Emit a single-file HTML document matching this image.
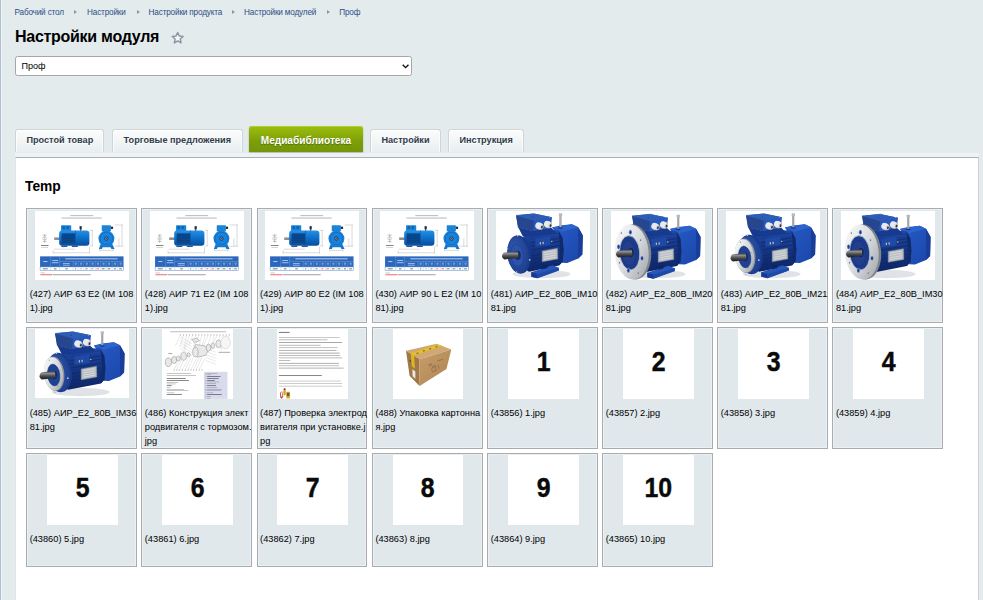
<!DOCTYPE html>
<html lang="ru"><head><meta charset="utf-8"><title>Настройки модуля</title>
<style>
html,body{margin:0;padding:0}
body{width:983px;height:600px;overflow:hidden;position:relative;background:#e4ebed;font-family:"Liberation Sans",sans-serif;color:#000}
.edge{position:absolute;left:0;top:0;width:1px;height:600px;background:#b0c0d0;box-shadow:1px 0 0 #edf2f4}
.bc{position:absolute;left:14.5px;top:6.5px;font-size:8.2px;letter-spacing:-.17px;line-height:12px;color:#2c4f85;white-space:nowrap}
.bc span{position:absolute;top:0}
.bc i{position:absolute;top:3.6px;width:0;height:0;border-left:3px solid #8d979e;border-top:2.3px solid transparent;border-bottom:2.3px solid transparent}
h1{position:absolute;left:15px;top:27.9px;margin:0;font-size:16px;letter-spacing:-.28px;line-height:18px;font-weight:bold;white-space:nowrap}
.star{position:absolute;left:170.6px;top:30.6px;width:13.4px;height:13.4px}
.sel{position:absolute;left:15.2px;top:56.4px;width:396.5px;height:19.4px;box-sizing:border-box;border:1px solid #a4a6a8;border-radius:2.5px;background:#fff;font-size:9.1px;line-height:19.4px;padding-left:5.2px}
.sel svg{position:absolute;right:1.2px;top:6.3px;width:7.2px;height:4.9px}
.tab{position:absolute;top:128.8px;height:23.7px;box-sizing:border-box;border:1px solid #cdd5d9;border-bottom:none;border-radius:3px 3px 0 0;background:linear-gradient(#fbfcfc,#e9eef0);box-shadow:inset 0 1px 0 #fff,inset 1px 0 0 rgba(255,255,255,.7),inset -1px 0 0 rgba(255,255,255,.7);font-size:9.15px;font-weight:bold;color:#2f3b49;text-shadow:0 1px 0 #fff;text-align:center;line-height:21.3px;white-space:nowrap}
.tab.act{top:125.6px;height:26.6px;border:none;background:linear-gradient(#9dbf0e,#7c9f08 60%,#73950a);color:#fff;font-size:10.1px;line-height:30.4px;text-shadow:0 1px 1px #526d08;box-shadow:inset 0 1px 0 #b2cf3a,0 1px 2px rgba(0,0,0,.25);border-radius:3px 3px 0 0}
.panel{position:absolute;left:15.4px;top:157px;width:963.6px;height:460px;box-sizing:border-box;background:#fff;border:1px solid #dfe5e9;border-right-color:#c9d2d8;border-top:1px solid #a7b2b8}
.band{position:absolute;left:15.2px;top:153.2px;width:963.8px;height:3.8px;background:#eef2f4}
h2{position:absolute;left:25px;top:178px;margin:0;font-size:13.8px;line-height:17px;font-weight:bold;white-space:nowrap}
.card{position:absolute;width:110.8px;box-sizing:border-box;border:1px solid #a9abad;background:#e1e8ec;box-shadow:inset 0 0 0 1px #e9f1f6}
.im{position:absolute;top:1.4px;height:69.2px;background:#fff;overflow:hidden}
.im svg{display:block;width:100%;height:100%}
.im.wide{left:7.5px;width:94px}
.im.sq{left:19.8px;width:70.8px;height:69.9px}
.num{text-align:center}
.num span{display:inline-block;font-weight:bold;font-size:27.6px;line-height:66px;transform:scaleX(.9);color:#0a0a0a;-webkit-text-stroke:.45px #0a0a0a}
.cap{position:absolute;left:2.6px;top:77.6px;font-size:9.24px;line-height:14.1px;white-space:nowrap;color:#000}
</style></head><body>
<div class="edge"></div>
<div class="bc">
<span style="left:0">Рабочий стол</span><i style="left:59.5px"></i>
<span style="left:72.5px">Настройки</span><i style="left:122px"></i>
<span style="left:134.1px">Настройки продукта</span><i style="left:217px"></i>
<span style="left:229.6px">Настройки модулей</span><i style="left:312.5px"></i>
<span style="left:324.7px">Проф</span>
</div>
<h1>Настройки модуля</h1>
<svg class="star" viewBox="0 0 24 24"><path d="M12 2.6l2.9 6.3 6.8.8-5 4.7 1.3 6.8-6-3.4-6 3.4 1.3-6.8-5-4.7 6.8-.8z" fill="#f4f6f7" stroke="#8a95a1" stroke-width="2.6" stroke-linejoin="round"/></svg>
<div class="sel">Проф<svg viewBox="0 0 8 6" preserveAspectRatio="none"><path d="M0.8 1l3.2 3.4L7.2 1" fill="none" stroke="#111" stroke-width="1.6"/></svg></div>

<div class="tab" style="left:15.2px;width:89.3px">Простой товар</div>
<div class="tab" style="left:111.6px;width:131.4px">Торговые предложения</div>
<div class="tab act" style="left:249.2px;width:113.5px">Медиабиблиотека</div>
<div class="tab" style="left:370.4px;width:70.2px">Настройки</div>
<div class="tab" style="left:448.4px;width:75.5px">Инструкция</div>
<div class="band"></div>
<div class="panel"></div>
<h2>Temp</h2>
<div class="card" style="left:26.05px;top:208.10px;height:114.70px"><div style="top:1.6px" class="im wide"><svg viewBox="0 0 94.5 69.4" preserveAspectRatio="none"><rect width="94.5" height="69.4" fill="#fff"/><rect x="35.5" y="4.4" width="23" height="0.7" fill="#9a9a9a"/><rect x="26.6" y="6.7" width="40.5" height="0.7" fill="#9a9a9a"/><g stroke="#9a9a9a" stroke-width=".5" fill="none"><ellipse cx="9.7" cy="27.5" rx="1.9" ry="1.6"/><path d="M7.6 24.3h4.2M9.7 23v9M7.8 30.6h3.8"/></g><rect x="6" y="34.2" width="7.6" height="0.9" fill="#777"/><rect x="6.4" y="36.3" width="6.6" height="0.5" fill="#aaa"/><g stroke="#8d9399" stroke-width=".35" fill="none"><path d="M18.2 39.5v3.2M54.8 36v6.7M18.2 41.9h36.6M19 38.3h21M57.5 19.4v15.6M55 19.4h3.5M55 35h3.5M65 37.5v3M78.5 37.5v3M65 39.5h13.5M87.5 14v21.5M80 14h8.5M84.3 27.5v8M80 35.3h8.5"/></g><defs><linearGradient id="sb0" x1="0" y1="0" x2="0" y2="1"><stop offset="0" stop-color="#2790e4"/><stop offset=".45" stop-color="#0f72cc"/><stop offset="1" stop-color="#084e9c"/></linearGradient></defs><rect x="19.3" y="26.5" width="5.6" height="2.6" fill="#8e8e8e"/><rect x="26.2" y="14.4" width="10.2" height="6" rx=".6" fill="#1b83d8"/><rect x="27.8" y="15.4" width="2.2" height="2.4" fill="#0d5cad"/><rect x="31.8" y="15.4" width="2.2" height="2.4" fill="#0d5cad"/><rect x="24.3" y="19.6" width="30.4" height="15.2" rx="3" fill="url(#sb0)"/><rect x="26.9" y="22.4" width="13.3" height="10.4" fill="#0b4c93"/><g stroke="#083a75" stroke-width=".6"><path d="M26.9 24.2h13.3M26.9 26h13.3M26.9 27.8h13.3M26.9 29.6h13.3M26.9 31.4h13.3"/></g><rect x="40.6" y="19.6" width=".5" height="15.2" fill="#0a4f9c"/><rect x="44.8" y="15.2" width="2.2" height="3.2" fill="#1d2e44"/><rect x="45.4" y="18.2" width="1" height="1.6" fill="#1d2e44"/><path d="M26.5 34.6h6v1.5h-6zM37 34.6h6v1.5h-6z" fill="#0d5cad"/><rect x="28" y="35.6" width="1" height=".7" fill="#e33"/><rect x="38.6" y="35.6" width="1" height=".7" fill="#e33"/><rect x="67.1" y="14.4" width="9.2" height="6" rx=".5" fill="#1b83d8"/><rect x="76.3" y="15.7" width="2.2" height="2.3" fill="#1d2e44"/><path d="M64.2 38l2-5.5h11.2l2.6 5.5h-3.2l-.8-1.6h-8l-.8 1.6z" fill="#1177d0"/><circle cx="71.8" cy="27.6" r="8" fill="#1a83d9"/><circle cx="71.8" cy="27.6" r="6.3" fill="none" stroke="#0d61b6" stroke-width=".6"/><circle cx="71.8" cy="27.6" r="2.2" fill="#0b4c93"/><circle cx="71.8" cy="27.6" r="1.2" fill="#8e8e8e"/><circle cx="71.8" cy="27.6" r=".5" fill="#222"/><rect x="5.1" y="45.5" width="83.9" height="10.6" fill="#2b67bc"/><rect x="5.1" y="56.1" width="83.9" height="3.7" fill="#fff" stroke="#2b67bc" stroke-width=".4"/><g stroke="#8fb4e6" stroke-width=".35"><path d="M15.8 45.5v14.3M24.8 45.5v14.3M24.8 50.6h64.2M38.3 50.6v9.2M43.5 50.6v9.2M49 50.6v9.2M55.2 50.6v9.2M60.6 50.6v9.2M66 50.6v9.2M71.6 50.6v9.2M77.6 50.6v9.2M83.2 50.6v9.2"/></g><g fill="#dbe8fa"><rect x="8.3" y="50.4" width="4.2" height=".8"/><rect x="17.4" y="49.2" width="5.8" height=".7"/><rect x="17" y="51.6" width="6.6" height=".7"/><rect x="30.5" y="47.6" width="52.5" height=".8"/><rect x="28" y="52.2" width="7" height=".6"/><rect x="28" y="54" width="7" height=".6"/></g><g fill="#cfe0f7"><rect x="39.8" y="52" width="2.2" height=".6"/><rect x="40.0" y="53.8" width="1.8" height=".5"/><rect x="45.2" y="52" width="2.2" height=".6"/><rect x="45.4" y="53.8" width="1.8" height=".5"/><rect x="51.0" y="52" width="2.2" height=".6"/><rect x="51.2" y="53.8" width="1.8" height=".5"/><rect x="56.8" y="52" width="2.2" height=".6"/><rect x="57.0" y="53.8" width="1.8" height=".5"/><rect x="62.2" y="52" width="2.2" height=".6"/><rect x="62.4" y="53.8" width="1.8" height=".5"/><rect x="67.8" y="52" width="2.2" height=".6"/><rect x="68.0" y="53.8" width="1.8" height=".5"/><rect x="73.4" y="52" width="2.2" height=".6"/><rect x="73.6" y="53.8" width="1.8" height=".5"/><rect x="79.3" y="52" width="2.2" height=".6"/><rect x="79.5" y="53.8" width="1.8" height=".5"/><rect x="85.0" y="52" width="2.2" height=".6"/><rect x="85.2" y="53.8" width="1.8" height=".5"/></g><g fill="#444"><rect x="7.8" y="57.7" width="5" height=".7"/><rect x="19" y="57.7" width="2.6" height=".7"/><rect x="30.4" y="57.7" width="2.6" height=".7"/><rect x="40.2" y="57.7" width="1.2" height=".7" fill="#444"/><rect x="45.8" y="57.7" width="1.0" height=".7" fill="#444"/><rect x="50.8" y="57.7" width="2.0" height=".7" fill="#444"/><rect x="56.6" y="57.7" width="2.0" height=".7" fill="#e33"/><rect x="61.8" y="57.7" width="2.6" height=".7" fill="#e33"/><rect x="67.2" y="57.7" width="2.8" height=".7" fill="#444"/><rect x="73.0" y="57.7" width="2.8" height=".7" fill="#444"/><rect x="79.4" y="57.7" width="2.0" height=".7" fill="#444"/><rect x="84.6" y="57.7" width="2.8" height=".7" fill="#444"/></g><rect x="5.4" y="61.9" width="4.6" height=".5" fill="#999"/><rect x="5.4" y="63.6" width="12" height=".8" fill="#e44"/><rect x="18" y="63.6" width="38" height=".8" fill="#888"/></svg></div><div class="cap" style="top:77.8px">(427) АИР 63 Е2 (IM 108<br>1).jpg</div></div>
<div class="card" style="left:141.20px;top:208.10px;height:114.70px"><div style="top:1.6px" class="im wide"><svg viewBox="0 0 94.5 69.4" preserveAspectRatio="none"><rect width="94.5" height="69.4" fill="#fff"/><rect x="35.5" y="4.4" width="23" height="0.7" fill="#9a9a9a"/><rect x="26.6" y="6.7" width="40.5" height="0.7" fill="#9a9a9a"/><g stroke="#9a9a9a" stroke-width=".5" fill="none"><ellipse cx="9.7" cy="27.5" rx="1.9" ry="1.6"/><path d="M7.6 24.3h4.2M9.7 23v9M7.8 30.6h3.8"/></g><rect x="6" y="34.2" width="7.6" height="0.9" fill="#777"/><rect x="6.4" y="36.3" width="6.6" height="0.5" fill="#aaa"/><g stroke="#8d9399" stroke-width=".35" fill="none"><path d="M18.2 39.5v3.2M54.8 36v6.7M18.2 41.9h36.6M19 38.3h21M57.5 19.4v15.6M55 19.4h3.5M55 35h3.5M65 37.5v3M78.5 37.5v3M65 39.5h13.5M87.5 14v21.5M80 14h8.5M84.3 27.5v8M80 35.3h8.5"/></g><defs><linearGradient id="sb1" x1="0" y1="0" x2="0" y2="1"><stop offset="0" stop-color="#2790e4"/><stop offset=".45" stop-color="#0f72cc"/><stop offset="1" stop-color="#084e9c"/></linearGradient></defs><rect x="19.3" y="26.5" width="5.6" height="2.6" fill="#8e8e8e"/><rect x="26.2" y="14.4" width="10.2" height="6" rx=".6" fill="#1b83d8"/><rect x="27.8" y="15.4" width="2.2" height="2.4" fill="#0d5cad"/><rect x="31.8" y="15.4" width="2.2" height="2.4" fill="#0d5cad"/><rect x="24.3" y="19.6" width="30.4" height="15.2" rx="3" fill="url(#sb1)"/><rect x="26.9" y="22.4" width="13.3" height="10.4" fill="#0b4c93"/><g stroke="#083a75" stroke-width=".6"><path d="M26.9 24.2h13.3M26.9 26h13.3M26.9 27.8h13.3M26.9 29.6h13.3M26.9 31.4h13.3"/></g><rect x="40.6" y="19.6" width=".5" height="15.2" fill="#0a4f9c"/><rect x="44.8" y="15.2" width="2.2" height="3.2" fill="#1d2e44"/><rect x="45.4" y="18.2" width="1" height="1.6" fill="#1d2e44"/><path d="M26.5 34.6h6v1.5h-6zM37 34.6h6v1.5h-6z" fill="#0d5cad"/><rect x="28" y="35.6" width="1" height=".7" fill="#e33"/><rect x="38.6" y="35.6" width="1" height=".7" fill="#e33"/><rect x="67.1" y="14.4" width="9.2" height="6" rx=".5" fill="#1b83d8"/><rect x="76.3" y="15.7" width="2.2" height="2.3" fill="#1d2e44"/><path d="M64.2 38l2-5.5h11.2l2.6 5.5h-3.2l-.8-1.6h-8l-.8 1.6z" fill="#1177d0"/><circle cx="71.8" cy="27.6" r="8" fill="#1a83d9"/><circle cx="71.8" cy="27.6" r="6.3" fill="none" stroke="#0d61b6" stroke-width=".6"/><circle cx="71.8" cy="27.6" r="2.2" fill="#0b4c93"/><circle cx="71.8" cy="27.6" r="1.2" fill="#8e8e8e"/><circle cx="71.8" cy="27.6" r=".5" fill="#222"/><rect x="5.1" y="45.5" width="83.9" height="10.6" fill="#2b67bc"/><rect x="5.1" y="56.1" width="83.9" height="3.7" fill="#fff" stroke="#2b67bc" stroke-width=".4"/><g stroke="#8fb4e6" stroke-width=".35"><path d="M15.8 45.5v14.3M24.8 45.5v14.3M24.8 50.6h64.2M38.3 50.6v9.2M43.5 50.6v9.2M49 50.6v9.2M55.2 50.6v9.2M60.6 50.6v9.2M66 50.6v9.2M71.6 50.6v9.2M77.6 50.6v9.2M83.2 50.6v9.2"/></g><g fill="#dbe8fa"><rect x="8.3" y="50.4" width="4.2" height=".8"/><rect x="17.4" y="49.2" width="5.8" height=".7"/><rect x="17" y="51.6" width="6.6" height=".7"/><rect x="30.5" y="47.6" width="52.5" height=".8"/><rect x="28" y="52.2" width="7" height=".6"/><rect x="28" y="54" width="7" height=".6"/></g><g fill="#cfe0f7"><rect x="39.8" y="52" width="2.2" height=".6"/><rect x="40.0" y="53.8" width="1.8" height=".5"/><rect x="45.2" y="52" width="2.2" height=".6"/><rect x="45.4" y="53.8" width="1.8" height=".5"/><rect x="51.0" y="52" width="2.2" height=".6"/><rect x="51.2" y="53.8" width="1.8" height=".5"/><rect x="56.8" y="52" width="2.2" height=".6"/><rect x="57.0" y="53.8" width="1.8" height=".5"/><rect x="62.2" y="52" width="2.2" height=".6"/><rect x="62.4" y="53.8" width="1.8" height=".5"/><rect x="67.8" y="52" width="2.2" height=".6"/><rect x="68.0" y="53.8" width="1.8" height=".5"/><rect x="73.4" y="52" width="2.2" height=".6"/><rect x="73.6" y="53.8" width="1.8" height=".5"/><rect x="79.3" y="52" width="2.2" height=".6"/><rect x="79.5" y="53.8" width="1.8" height=".5"/><rect x="85.0" y="52" width="2.2" height=".6"/><rect x="85.2" y="53.8" width="1.8" height=".5"/></g><g fill="#444"><rect x="7.8" y="57.7" width="5" height=".7"/><rect x="19" y="57.7" width="2.6" height=".7"/><rect x="30.4" y="57.7" width="2.6" height=".7"/><rect x="40.2" y="57.7" width="1.2" height=".7" fill="#444"/><rect x="45.8" y="57.7" width="1.0" height=".7" fill="#444"/><rect x="50.8" y="57.7" width="2.0" height=".7" fill="#444"/><rect x="56.6" y="57.7" width="2.0" height=".7" fill="#e33"/><rect x="61.8" y="57.7" width="2.6" height=".7" fill="#e33"/><rect x="67.2" y="57.7" width="2.8" height=".7" fill="#444"/><rect x="73.0" y="57.7" width="2.8" height=".7" fill="#444"/><rect x="79.4" y="57.7" width="2.0" height=".7" fill="#444"/><rect x="84.6" y="57.7" width="2.8" height=".7" fill="#444"/></g><rect x="5.4" y="61.9" width="4.6" height=".5" fill="#999"/><rect x="5.4" y="63.6" width="12" height=".8" fill="#e44"/><rect x="18" y="63.6" width="38" height=".8" fill="#888"/></svg></div><div class="cap" style="top:77.8px">(428) АИР 71 Е2 (IM 108<br>1).jpg</div></div>
<div class="card" style="left:256.50px;top:208.10px;height:114.70px"><div style="top:1.6px" class="im wide"><svg viewBox="0 0 94.5 69.4" preserveAspectRatio="none"><rect width="94.5" height="69.4" fill="#fff"/><rect x="35.5" y="4.4" width="23" height="0.7" fill="#9a9a9a"/><rect x="26.6" y="6.7" width="40.5" height="0.7" fill="#9a9a9a"/><g stroke="#9a9a9a" stroke-width=".5" fill="none"><ellipse cx="9.7" cy="27.5" rx="1.9" ry="1.6"/><path d="M7.6 24.3h4.2M9.7 23v9M7.8 30.6h3.8"/></g><rect x="6" y="34.2" width="7.6" height="0.9" fill="#777"/><rect x="6.4" y="36.3" width="6.6" height="0.5" fill="#aaa"/><g stroke="#8d9399" stroke-width=".35" fill="none"><path d="M18.2 39.5v3.2M54.8 36v6.7M18.2 41.9h36.6M19 38.3h21M57.5 19.4v15.6M55 19.4h3.5M55 35h3.5M65 37.5v3M78.5 37.5v3M65 39.5h13.5M87.5 14v21.5M80 14h8.5M84.3 27.5v8M80 35.3h8.5"/></g><defs><linearGradient id="sb2" x1="0" y1="0" x2="0" y2="1"><stop offset="0" stop-color="#2790e4"/><stop offset=".45" stop-color="#0f72cc"/><stop offset="1" stop-color="#084e9c"/></linearGradient></defs><rect x="19.3" y="26.5" width="5.6" height="2.6" fill="#8e8e8e"/><rect x="26.2" y="14.4" width="10.2" height="6" rx=".6" fill="#1b83d8"/><rect x="27.8" y="15.4" width="2.2" height="2.4" fill="#0d5cad"/><rect x="31.8" y="15.4" width="2.2" height="2.4" fill="#0d5cad"/><rect x="24.3" y="19.6" width="30.4" height="15.2" rx="3" fill="url(#sb2)"/><rect x="26.9" y="22.4" width="13.3" height="10.4" fill="#0b4c93"/><g stroke="#083a75" stroke-width=".6"><path d="M26.9 24.2h13.3M26.9 26h13.3M26.9 27.8h13.3M26.9 29.6h13.3M26.9 31.4h13.3"/></g><rect x="40.6" y="19.6" width=".5" height="15.2" fill="#0a4f9c"/><rect x="44.8" y="15.2" width="2.2" height="3.2" fill="#1d2e44"/><rect x="45.4" y="18.2" width="1" height="1.6" fill="#1d2e44"/><path d="M26.5 34.6h6v1.5h-6zM37 34.6h6v1.5h-6z" fill="#0d5cad"/><rect x="28" y="35.6" width="1" height=".7" fill="#e33"/><rect x="38.6" y="35.6" width="1" height=".7" fill="#e33"/><rect x="67.1" y="14.4" width="9.2" height="6" rx=".5" fill="#1b83d8"/><rect x="76.3" y="15.7" width="2.2" height="2.3" fill="#1d2e44"/><path d="M64.2 38l2-5.5h11.2l2.6 5.5h-3.2l-.8-1.6h-8l-.8 1.6z" fill="#1177d0"/><circle cx="71.8" cy="27.6" r="8" fill="#1a83d9"/><circle cx="71.8" cy="27.6" r="6.3" fill="none" stroke="#0d61b6" stroke-width=".6"/><circle cx="71.8" cy="27.6" r="2.2" fill="#0b4c93"/><circle cx="71.8" cy="27.6" r="1.2" fill="#8e8e8e"/><circle cx="71.8" cy="27.6" r=".5" fill="#222"/><rect x="5.1" y="45.5" width="83.9" height="10.6" fill="#2b67bc"/><rect x="5.1" y="56.1" width="83.9" height="3.7" fill="#fff" stroke="#2b67bc" stroke-width=".4"/><g stroke="#8fb4e6" stroke-width=".35"><path d="M15.8 45.5v14.3M24.8 45.5v14.3M24.8 50.6h64.2M38.3 50.6v9.2M43.5 50.6v9.2M49 50.6v9.2M55.2 50.6v9.2M60.6 50.6v9.2M66 50.6v9.2M71.6 50.6v9.2M77.6 50.6v9.2M83.2 50.6v9.2"/></g><g fill="#dbe8fa"><rect x="8.3" y="50.4" width="4.2" height=".8"/><rect x="17.4" y="49.2" width="5.8" height=".7"/><rect x="17" y="51.6" width="6.6" height=".7"/><rect x="30.5" y="47.6" width="52.5" height=".8"/><rect x="28" y="52.2" width="7" height=".6"/><rect x="28" y="54" width="7" height=".6"/></g><g fill="#cfe0f7"><rect x="39.8" y="52" width="2.2" height=".6"/><rect x="40.0" y="53.8" width="1.8" height=".5"/><rect x="45.2" y="52" width="2.2" height=".6"/><rect x="45.4" y="53.8" width="1.8" height=".5"/><rect x="51.0" y="52" width="2.2" height=".6"/><rect x="51.2" y="53.8" width="1.8" height=".5"/><rect x="56.8" y="52" width="2.2" height=".6"/><rect x="57.0" y="53.8" width="1.8" height=".5"/><rect x="62.2" y="52" width="2.2" height=".6"/><rect x="62.4" y="53.8" width="1.8" height=".5"/><rect x="67.8" y="52" width="2.2" height=".6"/><rect x="68.0" y="53.8" width="1.8" height=".5"/><rect x="73.4" y="52" width="2.2" height=".6"/><rect x="73.6" y="53.8" width="1.8" height=".5"/><rect x="79.3" y="52" width="2.2" height=".6"/><rect x="79.5" y="53.8" width="1.8" height=".5"/><rect x="85.0" y="52" width="2.2" height=".6"/><rect x="85.2" y="53.8" width="1.8" height=".5"/></g><g fill="#444"><rect x="7.8" y="57.7" width="5" height=".7"/><rect x="19" y="57.7" width="2.6" height=".7"/><rect x="30.4" y="57.7" width="2.6" height=".7"/><rect x="40.2" y="57.7" width="1.2" height=".7" fill="#444"/><rect x="45.8" y="57.7" width="1.0" height=".7" fill="#444"/><rect x="50.8" y="57.7" width="2.0" height=".7" fill="#444"/><rect x="56.6" y="57.7" width="2.0" height=".7" fill="#e33"/><rect x="61.8" y="57.7" width="2.6" height=".7" fill="#e33"/><rect x="67.2" y="57.7" width="2.8" height=".7" fill="#444"/><rect x="73.0" y="57.7" width="2.8" height=".7" fill="#444"/><rect x="79.4" y="57.7" width="2.0" height=".7" fill="#444"/><rect x="84.6" y="57.7" width="2.8" height=".7" fill="#444"/></g><rect x="5.4" y="61.9" width="4.6" height=".5" fill="#999"/><rect x="5.4" y="63.6" width="12" height=".8" fill="#e44"/><rect x="18" y="63.6" width="38" height=".8" fill="#888"/></svg></div><div class="cap" style="top:77.8px">(429) АИР 80 Е2 (IM 108<br>1).jpg</div></div>
<div class="card" style="left:371.80px;top:208.10px;height:114.70px"><div style="top:1.6px" class="im wide"><svg viewBox="0 0 94.5 69.4" preserveAspectRatio="none"><rect width="94.5" height="69.4" fill="#fff"/><rect x="35.5" y="4.4" width="23" height="0.7" fill="#9a9a9a"/><rect x="26.6" y="6.7" width="40.5" height="0.7" fill="#9a9a9a"/><g stroke="#9a9a9a" stroke-width=".5" fill="none"><ellipse cx="9.7" cy="27.5" rx="1.9" ry="1.6"/><path d="M7.6 24.3h4.2M9.7 23v9M7.8 30.6h3.8"/></g><rect x="6" y="34.2" width="7.6" height="0.9" fill="#777"/><rect x="6.4" y="36.3" width="6.6" height="0.5" fill="#aaa"/><g stroke="#8d9399" stroke-width=".35" fill="none"><path d="M18.2 39.5v3.2M54.8 36v6.7M18.2 41.9h36.6M19 38.3h21M57.5 19.4v15.6M55 19.4h3.5M55 35h3.5M65 37.5v3M78.5 37.5v3M65 39.5h13.5M87.5 14v21.5M80 14h8.5M84.3 27.5v8M80 35.3h8.5"/></g><defs><linearGradient id="sb3" x1="0" y1="0" x2="0" y2="1"><stop offset="0" stop-color="#2790e4"/><stop offset=".45" stop-color="#0f72cc"/><stop offset="1" stop-color="#084e9c"/></linearGradient></defs><rect x="19.3" y="26.5" width="5.6" height="2.6" fill="#8e8e8e"/><rect x="26.2" y="14.4" width="10.2" height="6" rx=".6" fill="#1b83d8"/><rect x="27.8" y="15.4" width="2.2" height="2.4" fill="#0d5cad"/><rect x="31.8" y="15.4" width="2.2" height="2.4" fill="#0d5cad"/><rect x="24.3" y="19.6" width="30.4" height="15.2" rx="3" fill="url(#sb3)"/><rect x="26.9" y="22.4" width="13.3" height="10.4" fill="#0b4c93"/><g stroke="#083a75" stroke-width=".6"><path d="M26.9 24.2h13.3M26.9 26h13.3M26.9 27.8h13.3M26.9 29.6h13.3M26.9 31.4h13.3"/></g><rect x="40.6" y="19.6" width=".5" height="15.2" fill="#0a4f9c"/><rect x="44.8" y="15.2" width="2.2" height="3.2" fill="#1d2e44"/><rect x="45.4" y="18.2" width="1" height="1.6" fill="#1d2e44"/><path d="M26.5 34.6h6v1.5h-6zM37 34.6h6v1.5h-6z" fill="#0d5cad"/><rect x="28" y="35.6" width="1" height=".7" fill="#e33"/><rect x="38.6" y="35.6" width="1" height=".7" fill="#e33"/><rect x="67.1" y="14.4" width="9.2" height="6" rx=".5" fill="#1b83d8"/><rect x="76.3" y="15.7" width="2.2" height="2.3" fill="#1d2e44"/><path d="M64.2 38l2-5.5h11.2l2.6 5.5h-3.2l-.8-1.6h-8l-.8 1.6z" fill="#1177d0"/><circle cx="71.8" cy="27.6" r="8" fill="#1a83d9"/><circle cx="71.8" cy="27.6" r="6.3" fill="none" stroke="#0d61b6" stroke-width=".6"/><circle cx="71.8" cy="27.6" r="2.2" fill="#0b4c93"/><circle cx="71.8" cy="27.6" r="1.2" fill="#8e8e8e"/><circle cx="71.8" cy="27.6" r=".5" fill="#222"/><rect x="5.1" y="45.5" width="83.9" height="10.6" fill="#2b67bc"/><rect x="5.1" y="56.1" width="83.9" height="3.7" fill="#fff" stroke="#2b67bc" stroke-width=".4"/><g stroke="#8fb4e6" stroke-width=".35"><path d="M15.8 45.5v14.3M24.8 45.5v14.3M24.8 50.6h64.2M38.3 50.6v9.2M43.5 50.6v9.2M49 50.6v9.2M55.2 50.6v9.2M60.6 50.6v9.2M66 50.6v9.2M71.6 50.6v9.2M77.6 50.6v9.2M83.2 50.6v9.2"/></g><g fill="#dbe8fa"><rect x="8.3" y="50.4" width="4.2" height=".8"/><rect x="17.4" y="49.2" width="5.8" height=".7"/><rect x="17" y="51.6" width="6.6" height=".7"/><rect x="30.5" y="47.6" width="52.5" height=".8"/><rect x="28" y="52.2" width="7" height=".6"/><rect x="28" y="54" width="7" height=".6"/></g><g fill="#cfe0f7"><rect x="39.8" y="52" width="2.2" height=".6"/><rect x="40.0" y="53.8" width="1.8" height=".5"/><rect x="45.2" y="52" width="2.2" height=".6"/><rect x="45.4" y="53.8" width="1.8" height=".5"/><rect x="51.0" y="52" width="2.2" height=".6"/><rect x="51.2" y="53.8" width="1.8" height=".5"/><rect x="56.8" y="52" width="2.2" height=".6"/><rect x="57.0" y="53.8" width="1.8" height=".5"/><rect x="62.2" y="52" width="2.2" height=".6"/><rect x="62.4" y="53.8" width="1.8" height=".5"/><rect x="67.8" y="52" width="2.2" height=".6"/><rect x="68.0" y="53.8" width="1.8" height=".5"/><rect x="73.4" y="52" width="2.2" height=".6"/><rect x="73.6" y="53.8" width="1.8" height=".5"/><rect x="79.3" y="52" width="2.2" height=".6"/><rect x="79.5" y="53.8" width="1.8" height=".5"/><rect x="85.0" y="52" width="2.2" height=".6"/><rect x="85.2" y="53.8" width="1.8" height=".5"/></g><g fill="#444"><rect x="7.8" y="57.7" width="5" height=".7"/><rect x="19" y="57.7" width="2.6" height=".7"/><rect x="30.4" y="57.7" width="2.6" height=".7"/><rect x="40.2" y="57.7" width="1.2" height=".7" fill="#444"/><rect x="45.8" y="57.7" width="1.0" height=".7" fill="#444"/><rect x="50.8" y="57.7" width="2.0" height=".7" fill="#444"/><rect x="56.6" y="57.7" width="2.0" height=".7" fill="#e33"/><rect x="61.8" y="57.7" width="2.6" height=".7" fill="#e33"/><rect x="67.2" y="57.7" width="2.8" height=".7" fill="#444"/><rect x="73.0" y="57.7" width="2.8" height=".7" fill="#444"/><rect x="79.4" y="57.7" width="2.0" height=".7" fill="#444"/><rect x="84.6" y="57.7" width="2.8" height=".7" fill="#444"/></g><rect x="5.4" y="61.9" width="4.6" height=".5" fill="#999"/><rect x="5.4" y="63.6" width="12" height=".8" fill="#e44"/><rect x="18" y="63.6" width="38" height=".8" fill="#888"/></svg></div><div class="cap" style="top:77.8px">(430) АИР 90 L Е2 (IM 10<br>81).jpg</div></div>
<div class="card" style="left:487.10px;top:208.10px;height:114.70px"><div style="top:1.6px" class="im wide"><svg viewBox="38 22 745 546" preserveAspectRatio="none"><defs><linearGradient id="m4sh" x1="0" y1="0" x2="0" y2="1"><stop offset="0" stop-color="#2b2b2d"/><stop offset=".3" stop-color="#8d8f92"/><stop offset=".6" stop-color="#4c4e50"/><stop offset="1" stop-color="#1c1c1d"/></linearGradient><linearGradient id="m4bd" x1="0" y1="0" x2="0" y2="1"><stop offset="0" stop-color="#2149a4"/><stop offset=".35" stop-color="#173a8c"/><stop offset="1" stop-color="#0d2462"/></linearGradient><linearGradient id="m4bk" x1="0" y1="0" x2="1" y2="1"><stop offset="0" stop-color="#275cc8"/><stop offset="1" stop-color="#1a45a8"/></linearGradient><linearGradient id="m4fl" x1="0" y1="0" x2="1" y2="1"><stop offset="0" stop-color="#ffffff"/><stop offset=".5" stop-color="#d9dcdf"/><stop offset="1" stop-color="#9da2a8"/></linearGradient><radialGradient id="m4fr" cx=".4" cy=".4" r=".7"><stop offset="0" stop-color="#3259b2"/><stop offset="1" stop-color="#1d3c8a"/></radialGradient></defs><rect x="38" y="22" width="745" height="546" fill="#fff"/><ellipse cx="400" cy="520" rx="230" ry="32" fill="#dfe2e6"/><g transform="translate(0,0)"><g transform="translate(0,0)"><path d="M482 152L545 136L640 126L690 150L726 215L722 366L690 396L602 432L556 430L552 250Z" fill="url(#m4bk)"/><path d="M482 152L640 126L690 150L560 186Z" fill="#2d63cc"/><path d="M690 150L726 215L722 366L690 396Z" fill="#183e98"/><rect x="541" y="50" width="16" height="106" fill="#8b8e92"/><rect x="545" y="50" width="5" height="106" fill="#c9cbce"/><rect x="536" y="40" width="27" height="22" rx="4" fill="#b9bcbf"/><ellipse cx="549" cy="156" rx="20" ry="6" fill="#16357f"/></g><path d="M255 215L330 170L530 176L566 235L574 330L566 420L538 452L300 502L250 470Z" fill="url(#m4bd)"/><g stroke="#102a6c" stroke-width="7" fill="none"><path d="M318 300L560 258M322 330L566 290M324 456L560 408M322 482L545 436M316 272L556 236M326 432L400 418M326 404L400 390M326 376L400 362M530 392L566 384M530 364L568 356M530 336L570 328"/><path d="M330 210L545 200M320 240L556 224" stroke="#17398c"/></g><path d="M535 178L566 235L574 330L566 420L538 452L548 330Z" fill="#102a6c" transform="translate(0,0)"/><path d="M350 240L470 222L470 290L350 305Z" fill="#1f49a6"/><rect x="385" y="268" width="9" height="18" fill="#d7c98a"/><rect x="407" y="265" width="9" height="18" fill="#d7c98a"/><circle cx="480" cy="262" r="6" fill="#c9b97a"/><path d="M404 337L526 315L528 400L404 423Z" fill="#b9bdc2" stroke="#7e858d" stroke-width="4"/><path d="M420 350L510 335M420 368L512 352M420 386L512 370M420 402L512 386" stroke="#e6e8ea" stroke-width="5"/><path d="M214 150L332 178L472 150L500 178L520 200L330 226L250 222Z" fill="#173a8e"/><path d="M196 56L338 42L482 72L472 152L332 180L214 152Z" fill="#2558c0"/><path d="M196 56L338 42L482 72L340 98Z" fill="#2f5db4"/><path d="M198 60L340 98L332 180L212 152Z" fill="#26468e"/><circle cx="214" cy="52" r="5" fill="#9aa6c4"/><circle cx="340" cy="40" r="5" fill="#9aa6c4"/><circle cx="462" cy="70" r="5" fill="#9aa6c4"/><circle cx="325" cy="72" r="4" fill="#16357f"/><ellipse cx="382" cy="142" rx="33" ry="28" fill="#aeb2b8" transform="rotate(20 382 142)"/><ellipse cx="378" cy="139" rx="29" ry="25" fill="#e9eaec" transform="rotate(20 382 142)"/><ellipse cx="400" cy="149" rx="13" ry="18" fill="#c9ccd0" transform="rotate(15 400 149)"/><ellipse cx="402" cy="150" rx="7" ry="11" fill="#2e3137" transform="rotate(15 402 150)"/><ellipse cx="450" cy="130" rx="33" ry="28" fill="#aeb2b8" transform="rotate(20 450 130)"/><ellipse cx="446" cy="127" rx="29" ry="25" fill="#e9eaec" transform="rotate(20 450 130)"/><ellipse cx="468" cy="137" rx="13" ry="18" fill="#c9ccd0" transform="rotate(15 468 137)"/><ellipse cx="470" cy="138" rx="7" ry="11" fill="#2e3137" transform="rotate(15 470 138)"/><path d="M318 506L486 450L536 470L536 492L366 553L318 540Z" fill="#2856bc"/><path d="M318 506L366 520L366 553L318 540Z" fill="#173a8e"/><path d="M366 520L536 470L536 492L366 553Z" fill="#1f49a6"/><path d="M405 455l40 -10v26l-40 10z" fill="#0e2560"/></g><ellipse cx="222" cy="365" rx="92" ry="152" transform="rotate(-7 222 365)" fill="#17398e"/><ellipse cx="212" cy="366" rx="84" ry="146" transform="rotate(-7 212 366)" fill="url(#m4fr)"/><ellipse cx="205" cy="372" rx="50" ry="88" transform="rotate(-7 205 372)" fill="#2c52aa" stroke="#1d3f92" stroke-width="5"/><circle cx="210" cy="216" r="7" fill="#b9c3d9"/><circle cx="305" cy="407" r="7" fill="#b9c3d9"/><circle cx="200" cy="505" r="7" fill="#b9c3d9"/><circle cx="130" cy="320" r="5" fill="#b9c3d9"/><ellipse cx="212" cy="372" rx="22" ry="36" fill="#122a66"/><path d="M100 352L212 337L216 392L104 405Q86 400 86 380Q86 358 100 352Z" fill="url(#m4sh)"/></svg></div><div class="cap" style="top:77.8px">(481) АИР_Е2_80В_IM10<br>81.jpg</div></div>
<div class="card" style="left:602.10px;top:208.10px;height:114.70px"><div style="top:1.6px" class="im wide"><svg viewBox="38 22 745 546" preserveAspectRatio="none"><defs><linearGradient id="m5sh" x1="0" y1="0" x2="0" y2="1"><stop offset="0" stop-color="#2b2b2d"/><stop offset=".3" stop-color="#8d8f92"/><stop offset=".6" stop-color="#4c4e50"/><stop offset="1" stop-color="#1c1c1d"/></linearGradient><linearGradient id="m5bd" x1="0" y1="0" x2="0" y2="1"><stop offset="0" stop-color="#2149a4"/><stop offset=".35" stop-color="#173a8c"/><stop offset="1" stop-color="#0d2462"/></linearGradient><linearGradient id="m5bk" x1="0" y1="0" x2="1" y2="1"><stop offset="0" stop-color="#275cc8"/><stop offset="1" stop-color="#1a45a8"/></linearGradient><linearGradient id="m5fl" x1="0" y1="0" x2="1" y2="1"><stop offset="0" stop-color="#ffffff"/><stop offset=".5" stop-color="#d9dcdf"/><stop offset="1" stop-color="#9da2a8"/></linearGradient><radialGradient id="m5fr" cx=".4" cy=".4" r=".7"><stop offset="0" stop-color="#3259b2"/><stop offset="1" stop-color="#1d3c8a"/></radialGradient></defs><rect x="38" y="22" width="745" height="546" fill="#fff"/><ellipse cx="400" cy="520" rx="230" ry="32" fill="#dfe2e6"/><g transform="translate(8,4)"><g transform="translate(14,8)"><path d="M482 152L545 136L640 126L690 150L726 215L722 366L690 396L602 432L556 430L552 250Z" fill="url(#m5bk)"/><path d="M482 152L640 126L690 150L560 186Z" fill="#2d63cc"/><path d="M690 150L726 215L722 366L690 396Z" fill="#183e98"/><rect x="541" y="50" width="16" height="106" fill="#8b8e92"/><rect x="545" y="50" width="5" height="106" fill="#c9cbce"/><rect x="536" y="40" width="27" height="22" rx="4" fill="#b9bcbf"/><ellipse cx="549" cy="156" rx="20" ry="6" fill="#16357f"/></g><path d="M255 215L330 170L544 176L580 235L588 330L580 420L552 452L300 502L250 470Z" fill="url(#m5bd)"/><g stroke="#102a6c" stroke-width="7" fill="none"><path d="M318 300L560 258M322 330L566 290M324 456L560 408M322 482L545 436M316 272L556 236M326 432L400 418M326 404L400 390M326 376L400 362M530 392L566 384M530 364L568 356M530 336L570 328"/><path d="M330 210L545 200M320 240L556 224" stroke="#17398c"/></g><path d="M535 178L566 235L574 330L566 420L538 452L548 330Z" fill="#102a6c" transform="translate(14,0)"/><path d="M350 240L470 222L470 290L350 305Z" fill="#1f49a6"/><rect x="385" y="268" width="9" height="18" fill="#d7c98a"/><rect x="407" y="265" width="9" height="18" fill="#d7c98a"/><circle cx="480" cy="262" r="6" fill="#c9b97a"/><path d="M404 337L526 315L528 400L404 423Z" fill="#b9bdc2" stroke="#7e858d" stroke-width="4"/><path d="M420 350L510 335M420 368L512 352M420 386L512 370M420 402L512 386" stroke="#e6e8ea" stroke-width="5"/><path d="M214 150L332 178L472 150L500 178L520 200L330 226L250 222Z" fill="#173a8e"/><path d="M196 56L338 42L482 72L472 152L332 180L214 152Z" fill="#2558c0"/><path d="M196 56L338 42L482 72L340 98Z" fill="#2f5db4"/><path d="M198 60L340 98L332 180L212 152Z" fill="#26468e"/><circle cx="214" cy="52" r="5" fill="#9aa6c4"/><circle cx="340" cy="40" r="5" fill="#9aa6c4"/><circle cx="462" cy="70" r="5" fill="#9aa6c4"/><circle cx="325" cy="72" r="4" fill="#16357f"/><ellipse cx="382" cy="142" rx="33" ry="28" fill="#aeb2b8" transform="rotate(20 382 142)"/><ellipse cx="378" cy="139" rx="29" ry="25" fill="#e9eaec" transform="rotate(20 382 142)"/><ellipse cx="400" cy="149" rx="13" ry="18" fill="#c9ccd0" transform="rotate(15 400 149)"/><ellipse cx="402" cy="150" rx="7" ry="11" fill="#2e3137" transform="rotate(15 402 150)"/><ellipse cx="450" cy="130" rx="33" ry="28" fill="#aeb2b8" transform="rotate(20 450 130)"/><ellipse cx="446" cy="127" rx="29" ry="25" fill="#e9eaec" transform="rotate(20 450 130)"/><ellipse cx="468" cy="137" rx="13" ry="18" fill="#c9ccd0" transform="rotate(15 468 137)"/><ellipse cx="470" cy="138" rx="7" ry="11" fill="#2e3137" transform="rotate(15 470 138)"/><path d="M318 506L486 450L536 470L536 492L366 553L318 540Z" fill="#2856bc"/><path d="M318 506L366 520L366 553L318 540Z" fill="#173a8e"/><path d="M366 520L536 470L536 492L366 553Z" fill="#1f49a6"/><path d="M405 455l40 -10v26l-40 10z" fill="#0e2560"/></g><ellipse cx="222" cy="345" rx="134" ry="218" transform="rotate(-5 222 345)" fill="#7f858c"/><ellipse cx="202" cy="346" rx="134" ry="218" transform="rotate(-5 202 346)" fill="url(#m5fl)"/><ellipse cx="186" cy="352" rx="80" ry="136" transform="rotate(-5 186 352)" fill="#1c3c8a" stroke="#c9ced4" stroke-width="6"/><ellipse cx="178" cy="356" rx="56" ry="100" transform="rotate(-5 178 356)" fill="#213f8c" stroke="#15307a" stroke-width="4"/><ellipse cx="192" cy="190" rx="12" ry="18" fill="#1c3f94" stroke="#eef0f2" stroke-width="3"/><ellipse cx="284" cy="395" rx="12" ry="18" fill="#1c3f94" stroke="#eef0f2" stroke-width="3"/><ellipse cx="176" cy="492" rx="12" ry="18" fill="#1c3f94" stroke="#eef0f2" stroke-width="3"/><ellipse cx="98" cy="305" rx="12" ry="18" fill="#1c3f94" stroke="#eef0f2" stroke-width="3"/><ellipse cx="120" cy="196" rx="5" ry="7" fill="#6d7278"/><ellipse cx="272" cy="252" rx="5" ry="7" fill="#6d7278"/><ellipse cx="254" cy="512" rx="5" ry="7" fill="#6d7278"/><ellipse cx="106" cy="430" rx="5" ry="7" fill="#6d7278"/><ellipse cx="196" cy="350" rx="22" ry="36" fill="#0f2458"/><path d="M94 335L204 322L208 380L96 388Q78 384 78 362Q78 342 94 335Z" fill="url(#m5sh)"/></svg></div><div class="cap" style="top:77.8px">(482) АИР_Е2_80В_IM20<br>81.jpg</div></div>
<div class="card" style="left:717.10px;top:208.10px;height:114.70px"><div style="top:1.6px" class="im wide"><svg viewBox="38 22 745 546" preserveAspectRatio="none"><defs><linearGradient id="m6sh" x1="0" y1="0" x2="0" y2="1"><stop offset="0" stop-color="#2b2b2d"/><stop offset=".3" stop-color="#8d8f92"/><stop offset=".6" stop-color="#4c4e50"/><stop offset="1" stop-color="#1c1c1d"/></linearGradient><linearGradient id="m6bd" x1="0" y1="0" x2="0" y2="1"><stop offset="0" stop-color="#2149a4"/><stop offset=".35" stop-color="#173a8c"/><stop offset="1" stop-color="#0d2462"/></linearGradient><linearGradient id="m6bk" x1="0" y1="0" x2="1" y2="1"><stop offset="0" stop-color="#275cc8"/><stop offset="1" stop-color="#1a45a8"/></linearGradient><linearGradient id="m6fl" x1="0" y1="0" x2="1" y2="1"><stop offset="0" stop-color="#ffffff"/><stop offset=".5" stop-color="#d9dcdf"/><stop offset="1" stop-color="#9da2a8"/></linearGradient><radialGradient id="m6fr" cx=".4" cy=".4" r=".7"><stop offset="0" stop-color="#3259b2"/><stop offset="1" stop-color="#1d3c8a"/></radialGradient></defs><rect x="38" y="22" width="745" height="546" fill="#fff"/><ellipse cx="400" cy="520" rx="230" ry="32" fill="#dfe2e6"/><g transform="translate(0,0)"><g transform="translate(22,0)"><path d="M482 152L545 136L640 126L690 150L726 215L722 366L690 396L602 432L556 430L552 250Z" fill="url(#m6bk)"/><path d="M482 152L640 126L690 150L560 186Z" fill="#2d63cc"/><path d="M690 150L726 215L722 366L690 396Z" fill="#183e98"/><rect x="541" y="50" width="16" height="106" fill="#8b8e92"/><rect x="545" y="50" width="5" height="106" fill="#c9cbce"/><rect x="536" y="40" width="27" height="22" rx="4" fill="#b9bcbf"/><ellipse cx="549" cy="156" rx="20" ry="6" fill="#16357f"/></g><path d="M255 215L330 170L552 176L588 235L596 330L588 420L560 452L300 502L250 470Z" fill="url(#m6bd)"/><g stroke="#102a6c" stroke-width="7" fill="none"><path d="M318 300L560 258M322 330L566 290M324 456L560 408M322 482L545 436M316 272L556 236M326 432L400 418M326 404L400 390M326 376L400 362M530 392L566 384M530 364L568 356M530 336L570 328"/><path d="M330 210L545 200M320 240L556 224" stroke="#17398c"/></g><path d="M535 178L566 235L574 330L566 420L538 452L548 330Z" fill="#102a6c" transform="translate(22,0)"/><path d="M350 240L470 222L470 290L350 305Z" fill="#1f49a6"/><rect x="385" y="268" width="9" height="18" fill="#d7c98a"/><rect x="407" y="265" width="9" height="18" fill="#d7c98a"/><circle cx="480" cy="262" r="6" fill="#c9b97a"/><path d="M404 337L526 315L528 400L404 423Z" fill="#b9bdc2" stroke="#7e858d" stroke-width="4"/><path d="M420 350L510 335M420 368L512 352M420 386L512 370M420 402L512 386" stroke="#e6e8ea" stroke-width="5"/><path d="M214 150L332 178L472 150L500 178L520 200L330 226L250 222Z" fill="#173a8e"/><path d="M196 56L338 42L482 72L472 152L332 180L214 152Z" fill="#2558c0"/><path d="M196 56L338 42L482 72L340 98Z" fill="#2f5db4"/><path d="M198 60L340 98L332 180L212 152Z" fill="#26468e"/><circle cx="214" cy="52" r="5" fill="#9aa6c4"/><circle cx="340" cy="40" r="5" fill="#9aa6c4"/><circle cx="462" cy="70" r="5" fill="#9aa6c4"/><circle cx="325" cy="72" r="4" fill="#16357f"/><ellipse cx="382" cy="142" rx="33" ry="28" fill="#aeb2b8" transform="rotate(20 382 142)"/><ellipse cx="378" cy="139" rx="29" ry="25" fill="#e9eaec" transform="rotate(20 382 142)"/><ellipse cx="400" cy="149" rx="13" ry="18" fill="#c9ccd0" transform="rotate(15 400 149)"/><ellipse cx="402" cy="150" rx="7" ry="11" fill="#2e3137" transform="rotate(15 402 150)"/><ellipse cx="450" cy="130" rx="33" ry="28" fill="#aeb2b8" transform="rotate(20 450 130)"/><ellipse cx="446" cy="127" rx="29" ry="25" fill="#e9eaec" transform="rotate(20 450 130)"/><ellipse cx="468" cy="137" rx="13" ry="18" fill="#c9ccd0" transform="rotate(15 468 137)"/><ellipse cx="470" cy="138" rx="7" ry="11" fill="#2e3137" transform="rotate(15 470 138)"/><path d="M318 506L486 450L536 470L536 492L366 553L318 540Z" fill="#2856bc"/><path d="M318 506L366 520L366 553L318 540Z" fill="#173a8e"/><path d="M366 520L536 470L536 492L366 553Z" fill="#1f49a6"/><path d="M405 455l40 -10v26l-40 10z" fill="#0e2560"/></g><ellipse cx="232" cy="365" rx="98" ry="156" transform="rotate(-7 232 365)" fill="#17398e"/><ellipse cx="222" cy="366" rx="92" ry="150" transform="rotate(-7 222 366)" fill="url(#m6fr)"/><ellipse cx="190" cy="375" rx="80" ry="136" transform="rotate(-7 190 375)" fill="#8f959c"/><ellipse cx="184" cy="376" rx="76" ry="132" transform="rotate(-7 184 376)" fill="url(#m6fl)"/><ellipse cx="186" cy="385" rx="48" ry="86" transform="rotate(-7 186 385)" fill="#1f4194" stroke="#15327c" stroke-width="5"/><circle cx="152" cy="268" r="5" fill="#8a9098"/><circle cx="236" cy="350" r="5" fill="#8a9098"/><circle cx="215" cy="470" r="5" fill="#8a9098"/><circle cx="120" cy="380" r="5" fill="#8a9098"/><circle cx="208" cy="212" r="7" fill="#b9c3d9"/><circle cx="298" cy="410" r="7" fill="#b9c3d9"/><circle cx="196" cy="522" r="7" fill="#b9c3d9"/><ellipse cx="192" cy="385" rx="20" ry="34" fill="#122a66"/><path d="M88 365L196 352L200 408L92 420Q74 415 74 394Q74 372 88 365Z" fill="url(#m6sh)"/></svg></div><div class="cap" style="top:77.8px">(483) АИР_Е2_80В_IM21<br>81.jpg</div></div>
<div class="card" style="left:832.30px;top:208.10px;height:114.70px"><div style="top:1.6px" class="im wide"><svg viewBox="38 22 745 546" preserveAspectRatio="none"><defs><linearGradient id="m7sh" x1="0" y1="0" x2="0" y2="1"><stop offset="0" stop-color="#2b2b2d"/><stop offset=".3" stop-color="#8d8f92"/><stop offset=".6" stop-color="#4c4e50"/><stop offset="1" stop-color="#1c1c1d"/></linearGradient><linearGradient id="m7bd" x1="0" y1="0" x2="0" y2="1"><stop offset="0" stop-color="#2149a4"/><stop offset=".35" stop-color="#173a8c"/><stop offset="1" stop-color="#0d2462"/></linearGradient><linearGradient id="m7bk" x1="0" y1="0" x2="1" y2="1"><stop offset="0" stop-color="#275cc8"/><stop offset="1" stop-color="#1a45a8"/></linearGradient><linearGradient id="m7fl" x1="0" y1="0" x2="1" y2="1"><stop offset="0" stop-color="#ffffff"/><stop offset=".5" stop-color="#d9dcdf"/><stop offset="1" stop-color="#9da2a8"/></linearGradient><radialGradient id="m7fr" cx=".4" cy=".4" r=".7"><stop offset="0" stop-color="#3259b2"/><stop offset="1" stop-color="#1d3c8a"/></radialGradient></defs><rect x="38" y="22" width="745" height="546" fill="#fff"/><ellipse cx="400" cy="520" rx="230" ry="32" fill="#dfe2e6"/><g transform="translate(8,4)"><g transform="translate(14,8)"><path d="M482 152L545 136L640 126L690 150L726 215L722 366L690 396L602 432L556 430L552 250Z" fill="url(#m7bk)"/><path d="M482 152L640 126L690 150L560 186Z" fill="#2d63cc"/><path d="M690 150L726 215L722 366L690 396Z" fill="#183e98"/><rect x="541" y="50" width="16" height="106" fill="#8b8e92"/><rect x="545" y="50" width="5" height="106" fill="#c9cbce"/><rect x="536" y="40" width="27" height="22" rx="4" fill="#b9bcbf"/><ellipse cx="549" cy="156" rx="20" ry="6" fill="#16357f"/></g><path d="M255 215L330 170L544 176L580 235L588 330L580 420L552 452L300 502L250 470Z" fill="url(#m7bd)"/><g stroke="#102a6c" stroke-width="7" fill="none"><path d="M318 300L560 258M322 330L566 290M324 456L560 408M322 482L545 436M316 272L556 236M326 432L400 418M326 404L400 390M326 376L400 362M530 392L566 384M530 364L568 356M530 336L570 328"/><path d="M330 210L545 200M320 240L556 224" stroke="#17398c"/></g><path d="M535 178L566 235L574 330L566 420L538 452L548 330Z" fill="#102a6c" transform="translate(14,0)"/><path d="M350 240L470 222L470 290L350 305Z" fill="#1f49a6"/><rect x="385" y="268" width="9" height="18" fill="#d7c98a"/><rect x="407" y="265" width="9" height="18" fill="#d7c98a"/><circle cx="480" cy="262" r="6" fill="#c9b97a"/><path d="M404 337L526 315L528 400L404 423Z" fill="#b9bdc2" stroke="#7e858d" stroke-width="4"/><path d="M420 350L510 335M420 368L512 352M420 386L512 370M420 402L512 386" stroke="#e6e8ea" stroke-width="5"/><path d="M214 150L332 178L472 150L500 178L520 200L330 226L250 222Z" fill="#173a8e"/><path d="M196 56L338 42L482 72L472 152L332 180L214 152Z" fill="#2558c0"/><path d="M196 56L338 42L482 72L340 98Z" fill="#2f5db4"/><path d="M198 60L340 98L332 180L212 152Z" fill="#26468e"/><circle cx="214" cy="52" r="5" fill="#9aa6c4"/><circle cx="340" cy="40" r="5" fill="#9aa6c4"/><circle cx="462" cy="70" r="5" fill="#9aa6c4"/><circle cx="325" cy="72" r="4" fill="#16357f"/><ellipse cx="382" cy="142" rx="33" ry="28" fill="#aeb2b8" transform="rotate(20 382 142)"/><ellipse cx="378" cy="139" rx="29" ry="25" fill="#e9eaec" transform="rotate(20 382 142)"/><ellipse cx="400" cy="149" rx="13" ry="18" fill="#c9ccd0" transform="rotate(15 400 149)"/><ellipse cx="402" cy="150" rx="7" ry="11" fill="#2e3137" transform="rotate(15 402 150)"/><ellipse cx="450" cy="130" rx="33" ry="28" fill="#aeb2b8" transform="rotate(20 450 130)"/><ellipse cx="446" cy="127" rx="29" ry="25" fill="#e9eaec" transform="rotate(20 450 130)"/><ellipse cx="468" cy="137" rx="13" ry="18" fill="#c9ccd0" transform="rotate(15 468 137)"/><ellipse cx="470" cy="138" rx="7" ry="11" fill="#2e3137" transform="rotate(15 470 138)"/></g><ellipse cx="222" cy="345" rx="134" ry="218" transform="rotate(-5 222 345)" fill="#7f858c"/><ellipse cx="202" cy="346" rx="134" ry="218" transform="rotate(-5 202 346)" fill="url(#m7fl)"/><ellipse cx="186" cy="352" rx="80" ry="136" transform="rotate(-5 186 352)" fill="#1c3c8a" stroke="#c9ced4" stroke-width="6"/><ellipse cx="178" cy="356" rx="56" ry="100" transform="rotate(-5 178 356)" fill="#213f8c" stroke="#15307a" stroke-width="4"/><ellipse cx="192" cy="190" rx="12" ry="18" fill="#1c3f94" stroke="#eef0f2" stroke-width="3"/><ellipse cx="284" cy="395" rx="12" ry="18" fill="#1c3f94" stroke="#eef0f2" stroke-width="3"/><ellipse cx="176" cy="492" rx="12" ry="18" fill="#1c3f94" stroke="#eef0f2" stroke-width="3"/><ellipse cx="98" cy="305" rx="12" ry="18" fill="#1c3f94" stroke="#eef0f2" stroke-width="3"/><ellipse cx="120" cy="196" rx="5" ry="7" fill="#6d7278"/><ellipse cx="272" cy="252" rx="5" ry="7" fill="#6d7278"/><ellipse cx="254" cy="512" rx="5" ry="7" fill="#6d7278"/><ellipse cx="106" cy="430" rx="5" ry="7" fill="#6d7278"/><ellipse cx="196" cy="350" rx="22" ry="36" fill="#0f2458"/><path d="M94 335L204 322L208 380L96 388Q78 384 78 362Q78 342 94 335Z" fill="url(#m7sh)"/></svg></div><div class="cap" style="top:77.8px">(484) АИР_Е2_80В_IM30<br>81.jpg</div></div>
<div class="card" style="left:26.05px;top:327.10px;height:121.75px"><div style="top:0.8px" class="im wide"><svg viewBox="38 22 745 546" preserveAspectRatio="none"><defs><linearGradient id="m8sh" x1="0" y1="0" x2="0" y2="1"><stop offset="0" stop-color="#2b2b2d"/><stop offset=".3" stop-color="#8d8f92"/><stop offset=".6" stop-color="#4c4e50"/><stop offset="1" stop-color="#1c1c1d"/></linearGradient><linearGradient id="m8bd" x1="0" y1="0" x2="0" y2="1"><stop offset="0" stop-color="#2149a4"/><stop offset=".35" stop-color="#173a8c"/><stop offset="1" stop-color="#0d2462"/></linearGradient><linearGradient id="m8bk" x1="0" y1="0" x2="1" y2="1"><stop offset="0" stop-color="#275cc8"/><stop offset="1" stop-color="#1a45a8"/></linearGradient><linearGradient id="m8fl" x1="0" y1="0" x2="1" y2="1"><stop offset="0" stop-color="#ffffff"/><stop offset=".5" stop-color="#d9dcdf"/><stop offset="1" stop-color="#9da2a8"/></linearGradient><radialGradient id="m8fr" cx=".4" cy=".4" r=".7"><stop offset="0" stop-color="#3259b2"/><stop offset="1" stop-color="#1d3c8a"/></radialGradient></defs><rect x="38" y="22" width="745" height="546" fill="#fff"/><ellipse cx="400" cy="520" rx="230" ry="32" fill="#dfe2e6"/><g transform="translate(0,0)"><g transform="translate(22,0)"><path d="M482 152L545 136L640 126L690 150L726 215L722 366L690 396L602 432L556 430L552 250Z" fill="url(#m8bk)"/><path d="M482 152L640 126L690 150L560 186Z" fill="#2d63cc"/><path d="M690 150L726 215L722 366L690 396Z" fill="#183e98"/><rect x="541" y="50" width="16" height="106" fill="#8b8e92"/><rect x="545" y="50" width="5" height="106" fill="#c9cbce"/><rect x="536" y="40" width="27" height="22" rx="4" fill="#b9bcbf"/><ellipse cx="549" cy="156" rx="20" ry="6" fill="#16357f"/></g><path d="M255 215L330 170L552 176L588 235L596 330L588 420L560 452L300 502L250 470Z" fill="url(#m8bd)"/><g stroke="#102a6c" stroke-width="7" fill="none"><path d="M318 300L560 258M322 330L566 290M324 456L560 408M322 482L545 436M316 272L556 236M326 432L400 418M326 404L400 390M326 376L400 362M530 392L566 384M530 364L568 356M530 336L570 328"/><path d="M330 210L545 200M320 240L556 224" stroke="#17398c"/></g><path d="M535 178L566 235L574 330L566 420L538 452L548 330Z" fill="#102a6c" transform="translate(22,0)"/><path d="M350 240L470 222L470 290L350 305Z" fill="#1f49a6"/><rect x="385" y="268" width="9" height="18" fill="#d7c98a"/><rect x="407" y="265" width="9" height="18" fill="#d7c98a"/><circle cx="480" cy="262" r="6" fill="#c9b97a"/><path d="M404 337L526 315L528 400L404 423Z" fill="#b9bdc2" stroke="#7e858d" stroke-width="4"/><path d="M420 350L510 335M420 368L512 352M420 386L512 370M420 402L512 386" stroke="#e6e8ea" stroke-width="5"/><path d="M214 150L332 178L472 150L500 178L520 200L330 226L250 222Z" fill="#173a8e"/><path d="M196 56L338 42L482 72L472 152L332 180L214 152Z" fill="#2558c0"/><path d="M196 56L338 42L482 72L340 98Z" fill="#2f5db4"/><path d="M198 60L340 98L332 180L212 152Z" fill="#26468e"/><circle cx="214" cy="52" r="5" fill="#9aa6c4"/><circle cx="340" cy="40" r="5" fill="#9aa6c4"/><circle cx="462" cy="70" r="5" fill="#9aa6c4"/><circle cx="325" cy="72" r="4" fill="#16357f"/><ellipse cx="382" cy="142" rx="33" ry="28" fill="#aeb2b8" transform="rotate(20 382 142)"/><ellipse cx="378" cy="139" rx="29" ry="25" fill="#e9eaec" transform="rotate(20 382 142)"/><ellipse cx="400" cy="149" rx="13" ry="18" fill="#c9ccd0" transform="rotate(15 400 149)"/><ellipse cx="402" cy="150" rx="7" ry="11" fill="#2e3137" transform="rotate(15 402 150)"/><ellipse cx="450" cy="130" rx="33" ry="28" fill="#aeb2b8" transform="rotate(20 450 130)"/><ellipse cx="446" cy="127" rx="29" ry="25" fill="#e9eaec" transform="rotate(20 450 130)"/><ellipse cx="468" cy="137" rx="13" ry="18" fill="#c9ccd0" transform="rotate(15 468 137)"/><ellipse cx="470" cy="138" rx="7" ry="11" fill="#2e3137" transform="rotate(15 470 138)"/></g><ellipse cx="232" cy="365" rx="98" ry="156" transform="rotate(-7 232 365)" fill="#17398e"/><ellipse cx="222" cy="366" rx="92" ry="150" transform="rotate(-7 222 366)" fill="url(#m8fr)"/><ellipse cx="190" cy="375" rx="80" ry="136" transform="rotate(-7 190 375)" fill="#8f959c"/><ellipse cx="184" cy="376" rx="76" ry="132" transform="rotate(-7 184 376)" fill="url(#m8fl)"/><ellipse cx="186" cy="385" rx="48" ry="86" transform="rotate(-7 186 385)" fill="#1f4194" stroke="#15327c" stroke-width="5"/><circle cx="152" cy="268" r="5" fill="#8a9098"/><circle cx="236" cy="350" r="5" fill="#8a9098"/><circle cx="215" cy="470" r="5" fill="#8a9098"/><circle cx="120" cy="380" r="5" fill="#8a9098"/><circle cx="208" cy="212" r="7" fill="#b9c3d9"/><circle cx="298" cy="410" r="7" fill="#b9c3d9"/><circle cx="196" cy="522" r="7" fill="#b9c3d9"/><ellipse cx="192" cy="385" rx="20" ry="34" fill="#122a66"/><path d="M88 365L196 352L200 408L92 420Q74 415 74 394Q74 372 88 365Z" fill="url(#m8sh)"/></svg></div><div class="cap" style="top:77.8px">(485) АИР_Е2_80В_IM36<br>81.jpg</div></div>
<div class="card" style="left:141.20px;top:327.10px;height:121.75px"><div style="top:0.8px" class="im sq"><svg viewBox="55 18 557 550" preserveAspectRatio="none"><rect x="55" y="18" width="557" height="550" fill="#fff"/><rect x="120" y="37" width="440" height="6" fill="#a8a8a8"/><rect x="385" y="355" width="185" height="213" fill="#d9dbec"/><g stroke="#b9b9b9" stroke-width="2.5" fill="none"><path d="M200 68L160 150"/><path d="M224 68L194 162"/><path d="M248 68L228 174"/><path d="M272 68L232 186"/><path d="M296 68L266 150"/><path d="M320 68L300 162"/><path d="M344 68L304 174"/><path d="M368 68L338 186"/><path d="M392 68L372 150"/><path d="M416 68L376 162"/><path d="M440 68L410 174"/><path d="M464 68L444 186"/><path d="M488 68L448 150"/><path d="M512 68L482 162"/><path d="M536 68L516 174"/><path d="M560 68L520 186"/><path d="M584 68L554 150"/><path d="M150 338L195 250"/><path d="M172 338L217 242"/><path d="M194 338L239 234"/><path d="M216 338L261 250"/><path d="M238 338L283 242"/><path d="M260 338L305 234"/><path d="M282 338L327 250"/><path d="M304 338L349 242"/><path d="M326 338L371 234"/><path d="M348 338L393 250"/><path d="M478 200L400 170"/><path d="M478 225L400 195"/><path d="M478 250L400 220"/><path d="M478 272L400 242"/><path d="M478 296L400 266"/><path d="M200 80L290 135"/><path d="M200 103L290 158"/><path d="M200 125L290 180"/><path d="M200 148L290 203"/><path d="M200 170L290 225"/></g><g fill="#888"><rect x="196" y="62" width="8" height="6"/><rect x="220" y="62" width="8" height="6"/><rect x="244" y="62" width="8" height="6"/><rect x="268" y="62" width="8" height="6"/><rect x="292" y="62" width="8" height="6"/><rect x="316" y="62" width="8" height="6"/><rect x="340" y="62" width="8" height="6"/><rect x="364" y="62" width="8" height="6"/><rect x="388" y="62" width="8" height="6"/><rect x="412" y="62" width="8" height="6"/><rect x="436" y="62" width="8" height="6"/><rect x="460" y="62" width="8" height="6"/><rect x="484" y="62" width="8" height="6"/><rect x="508" y="62" width="8" height="6"/><rect x="532" y="62" width="8" height="6"/><rect x="556" y="62" width="8" height="6"/><rect x="580" y="62" width="8" height="6"/><rect x="146" y="338" width="8" height="6"/><rect x="168" y="338" width="8" height="6"/><rect x="190" y="338" width="8" height="6"/><rect x="212" y="338" width="8" height="6"/><rect x="234" y="338" width="8" height="6"/><rect x="256" y="338" width="8" height="6"/><rect x="278" y="338" width="8" height="6"/><rect x="300" y="338" width="8" height="6"/><rect x="322" y="338" width="8" height="6"/><rect x="344" y="338" width="8" height="6"/><rect x="366" y="338" width="8" height="6"/></g><g fill="#e9e9e9" stroke="#8a8a8a" stroke-width="4"><ellipse cx="105" cy="280" rx="24" ry="34"/><ellipse cx="150" cy="262" rx="20" ry="28"/><ellipse cx="183" cy="250" rx="15" ry="20"/><ellipse cx="225" cy="232" rx="22" ry="32"/><ellipse cx="265" cy="222" rx="12" ry="16"/><path d="M300 190L320 140L390 150L420 180L400 225L330 240Z"/><ellipse cx="318" cy="200" rx="22" ry="36"/><path d="M290 100l40-10l20 20l-40 15z"/><ellipse cx="420" cy="165" rx="18" ry="28"/><ellipse cx="455" cy="150" rx="14" ry="22"/><ellipse cx="500" cy="135" rx="22" ry="30"/><ellipse cx="555" cy="125" rx="38" ry="48" fill="#f6f6f6" stroke="#c4c4c4"/></g><g fill="#777"><rect x="105" y="210" width="30" height="5"/><rect x="500" y="198" width="90" height="5"/></g><rect x="92" y="366" width="190" height="5" fill="#a5a5a5"/><rect x="92" y="380" width="230" height="5" fill="#a5a5a5"/><rect x="92" y="406" width="150" height="5" fill="#444"/><rect x="92" y="420" width="175" height="5" fill="#444"/><rect x="92" y="436" width="90" height="5" fill="#a5a5a5"/><rect x="92" y="448" width="70" height="5" fill="#a5a5a5"/><rect x="92" y="462" width="40" height="5" fill="#444"/><rect x="92" y="478" width="30" height="5" fill="#a5a5a5"/><rect x="92" y="490" width="135" height="5" fill="#a5a5a5"/><rect x="92" y="500" width="170" height="5" fill="#a5a5a5"/><rect x="92" y="518" width="60" height="5" fill="#a5a5a5"/><rect x="92" y="530" width="120" height="5" fill="#444"/><rect x="398" y="364" width="6" height="5" fill="#777"/><rect x="410" y="364" width="80" height="5" fill="#9a9ab0"/><rect x="398" y="376" width="6" height="5" fill="#777"/><rect x="410" y="376" width="30" height="5" fill="#9a9ab0"/><rect x="398" y="390" width="6" height="5" fill="#777"/><rect x="410" y="390" width="105" height="5" fill="#454555"/><rect x="398" y="406" width="6" height="5" fill="#777"/><rect x="410" y="406" width="90" height="5" fill="#454555"/><rect x="398" y="420" width="6" height="5" fill="#777"/><rect x="410" y="420" width="60" height="5" fill="#454555"/><rect x="398" y="432" width="6" height="5" fill="#777"/><rect x="410" y="432" width="95" height="5" fill="#9a9ab0"/><rect x="398" y="444" width="6" height="5" fill="#777"/><rect x="410" y="444" width="70" height="5" fill="#9a9ab0"/><rect x="398" y="462" width="6" height="5" fill="#777"/><rect x="410" y="462" width="70" height="5" fill="#454555"/><rect x="398" y="478" width="6" height="5" fill="#777"/><rect x="410" y="478" width="80" height="5" fill="#9a9ab0"/><rect x="398" y="490" width="6" height="5" fill="#777"/><rect x="410" y="490" width="115" height="5" fill="#9a9ab0"/><rect x="398" y="500" width="6" height="5" fill="#777"/><rect x="410" y="500" width="110" height="5" fill="#9a9ab0"/><rect x="398" y="518" width="6" height="5" fill="#777"/><rect x="410" y="518" width="50" height="5" fill="#9a9ab0"/><rect x="398" y="532" width="6" height="5" fill="#777"/><rect x="410" y="532" width="115" height="5" fill="#454555"/><rect x="398" y="546" width="6" height="5" fill="#777"/><rect x="410" y="546" width="30" height="5" fill="#9a9ab0"/><rect x="398" y="560" width="6" height="5" fill="#777"/><rect x="410" y="560" width="25" height="5" fill="#9a9ab0"/></svg></div><div class="cap" style="top:77.8px">(486) Конструкция элект<br>родвигателя с тормозом.<br>jpg</div></div>
<div class="card" style="left:256.50px;top:327.10px;height:121.75px"><div style="top:0.8px" class="im sq"><svg viewBox="55 18 560 550" preserveAspectRatio="none"><rect x="55" y="18" width="560" height="550" fill="#fff"/><rect x="70" y="41" width="85" height="7" fill="#666"/><rect x="70" y="83" width="480" height="5" fill="#a8a8a8"/><rect x="70" y="101" width="385" height="5" fill="#969696"/><rect x="70" y="123" width="500" height="5" fill="#767676"/><rect x="70" y="143" width="330" height="5" fill="#969696"/><rect x="70" y="163" width="465" height="5" fill="#a0a0a0"/><rect x="70" y="183" width="455" height="5" fill="#8a8a8a"/><rect x="70" y="205" width="480" height="5" fill="#7a7a7a"/><rect x="70" y="223" width="485" height="5" fill="#969696"/><rect x="70" y="243" width="500" height="5" fill="#969696"/><rect x="70" y="263" width="90" height="5" fill="#969696"/><rect x="70" y="285" width="475" height="5" fill="#868686"/><rect x="70" y="305" width="475" height="5" fill="#a0a0a0"/><rect x="70" y="323" width="512" height="5" fill="#8a8a8a"/><rect x="70" y="381" width="340" height="7" fill="#777"/><rect x="70" y="425" width="490" height="5" fill="#b0b0b0"/><rect x="70" y="445" width="500" height="5" fill="#b0b0b0"/><rect x="70" y="465" width="500" height="5" fill="#b0b0b0"/><path d="M78 520l18 -12l8 40l-10 18l-12 -6z" fill="#c8323a"/><path d="M84 520l10-6l4 30l-8 12z" fill="#fff"/><rect x="106" y="490" width="18" height="50" rx="4" fill="#d8a21c"/><rect x="109" y="484" width="12" height="14" fill="#b5272d"/><rect x="128" y="512" width="30" height="52" rx="5" fill="#e0b020"/><rect x="133" y="520" width="20" height="26" fill="#55585c"/></svg></div><div class="cap" style="top:77.8px">(487) Проверка электрод<br>вигателя при установке.j<br>pg</div></div>
<div class="card" style="left:371.80px;top:327.10px;height:121.75px"><div style="top:0.8px" class="im sq"><svg viewBox="55 18 560 550" preserveAspectRatio="none"><rect x="55" y="18" width="560" height="550" fill="#fff"/><defs><linearGradient id="bxf" x1="0" y1="0" x2="1" y2="1"><stop offset="0" stop-color="#c79d69"/><stop offset="1" stop-color="#ad8353"/></linearGradient></defs><path d="M185 385L265 465L300 450L200 380Z" fill="#e9e6e2"/><path d="M158 190L400 134L516 180L265 256Z" fill="#cfa874"/><path d="M158 190L265 256L265 466L186 386Z" fill="#a07848"/><path d="M265 256L516 180L478 332L265 466Z" fill="url(#bxf)"/><path d="M196 210L415 140L445 152L222 224Z" fill="#e6c321"/><path d="M196 210L222 224L228 330L204 312Z" fill="#dcb81c"/><g fill="#4a4120"><path d="M240 206l14-4l4 6l-14 4zM290 190l14-4l4 6l-14 4zM340 174l14-4l4 6l-14 4zM390 158l14-4l4 6l-14 4z"/></g><path d="M208 335L232 352L232 410L210 390Z" fill="#e8e8e8"/><rect x="188" y="262" width="6" height="16" fill="#333"/><g stroke="#6d5a3a" stroke-width="4" fill="none"><path d="M335 300l30-10M340 310l22-8M405 270l45-14"/><path d="M360 340l10-30l20-5l5 40l-25 10zM372 322l12-2M410 300l10 30"/></g></svg></div><div class="cap" style="top:77.8px">(488) Упаковка картонна<br>я.jpg</div></div>
<div class="card" style="left:487.10px;top:327.10px;height:121.75px"><div style="top:0.8px" class="im sq num"><span>1</span></div><div class="cap" style="top:77.8px">(43856) 1.jpg</div></div>
<div class="card" style="left:602.10px;top:327.10px;height:121.75px"><div style="top:0.8px" class="im sq num"><span>2</span></div><div class="cap" style="top:77.8px">(43857) 2.jpg</div></div>
<div class="card" style="left:717.10px;top:327.10px;height:121.75px"><div style="top:0.8px" class="im sq num"><span>3</span></div><div class="cap" style="top:77.8px">(43858) 3.jpg</div></div>
<div class="card" style="left:832.30px;top:327.10px;height:121.75px"><div style="top:0.8px" class="im sq num"><span>4</span></div><div class="cap" style="top:77.8px">(43859) 4.jpg</div></div>
<div class="card" style="left:26.05px;top:453.10px;height:114.10px"><div style="top:0.7px" class="im sq num"><span>5</span></div><div class="cap" style="top:77.8px">(43860) 5.jpg</div></div>
<div class="card" style="left:141.20px;top:453.10px;height:114.10px"><div style="top:0.7px" class="im sq num"><span>6</span></div><div class="cap" style="top:77.8px">(43861) 6.jpg</div></div>
<div class="card" style="left:256.50px;top:453.10px;height:114.10px"><div style="top:0.7px" class="im sq num"><span>7</span></div><div class="cap" style="top:77.8px">(43862) 7.jpg</div></div>
<div class="card" style="left:371.80px;top:453.10px;height:114.10px"><div style="top:0.7px" class="im sq num"><span>8</span></div><div class="cap" style="top:77.8px">(43863) 8.jpg</div></div>
<div class="card" style="left:487.10px;top:453.10px;height:114.10px"><div style="top:0.7px" class="im sq num"><span>9</span></div><div class="cap" style="top:77.8px">(43864) 9.jpg</div></div>
<div class="card" style="left:602.10px;top:453.10px;height:114.10px"><div style="top:0.7px" class="im sq num"><span>10</span></div><div class="cap" style="top:77.8px">(43865) 10.jpg</div></div>
</body></html>
